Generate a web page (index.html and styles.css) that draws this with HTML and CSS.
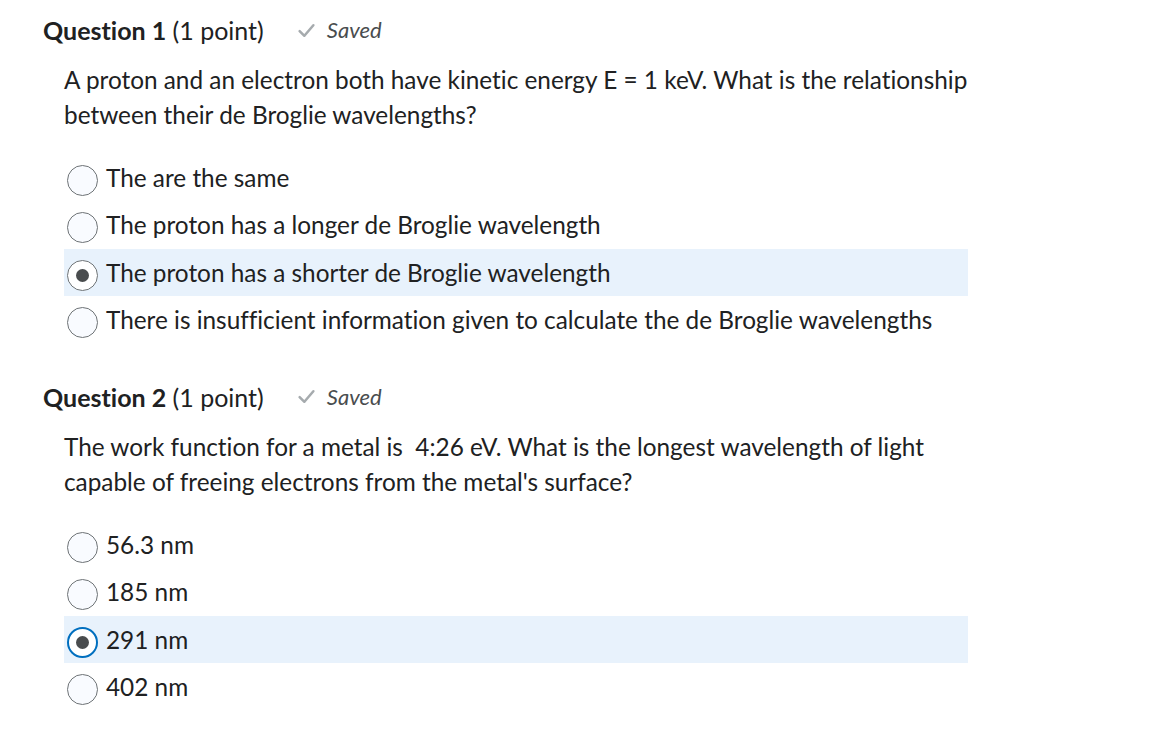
FILE: index.html
```html
<!DOCTYPE html>
<html>
<head>
<meta charset="utf-8">
<link rel="stylesheet" href="styles.css">
</head>
<body>
<div class="page">
  <section class="question">
    <h2 class="q-head"><span class="q-title">Question 1</span> <span class="q-points">(1 point)</span><span class="saved"><svg class="check" viewBox="0 0 18 18" width="19" height="19"><path d="M2.5 9.5 L7 14 L15.5 4" fill="none" stroke="#a6abae" stroke-width="2.4" stroke-linecap="round" stroke-linejoin="round"/></svg><em>Saved</em></span></h2>
    <div class="q-body">
      <p class="q-text">A proton and an electron both have kinetic energy E = 1 keV. What is the relationship between their de Broglie wavelengths?</p>
      <div class="options">
        <label class="opt"><span class="radio"></span><span class="opt-text">The are the same</span></label>
        <label class="opt"><span class="radio"></span><span class="opt-text">The proton has a longer de Broglie wavelength</span></label>
        <label class="opt selected"><span class="radio checked"></span><span class="opt-text">The proton has a shorter de Broglie wavelength</span></label>
        <label class="opt"><span class="radio"></span><span class="opt-text">There is insufficient information given to calculate the de Broglie wavelengths</span></label>
      </div>
    </div>
  </section>
  <section class="question q2">
    <h2 class="q-head"><span class="q-title">Question 2</span> <span class="q-points">(1 point)</span><span class="saved"><svg class="check" viewBox="0 0 18 18" width="19" height="19"><path d="M2.5 9.5 L7 14 L15.5 4" fill="none" stroke="#a6abae" stroke-width="2.4" stroke-linecap="round" stroke-linejoin="round"/></svg><em>Saved</em></span></h2>
    <div class="q-body">
      <p class="q-text">The work function for a metal is&nbsp; 4:26 eV. What is the longest wavelength of light capable of freeing electrons from the metal's surface?</p>
      <div class="options">
        <label class="opt"><span class="radio"></span><span class="opt-text">56.3 nm</span></label>
        <label class="opt"><span class="radio"></span><span class="opt-text">185 nm</span></label>
        <label class="opt selected"><span class="radio checked focus"></span><span class="opt-text">291 nm</span></label>
        <label class="opt"><span class="radio"></span><span class="opt-text">402 nm</span></label>
      </div>
    </div>
  </section>
</div>
</body>
</html>
```

FILE: styles.css
```css
* { box-sizing: border-box; }
body {
  margin: 0;
  background: #fff;
  font-family: Lato, "Open Sans", sans-serif;
  color: #202122;
  font-variant-ligatures: none;
}
.page {
  padding: 15px 0 0 43px;
}
.question {
  margin: 0;
}
.q2 {
  margin-top: 38.8px;
}
.q-head {
  margin: 0;
  font-size: 25px;
  line-height: 30px;
  font-weight: 400;
}
.q-title { font-weight: 700; }
.saved {
  display: inline-flex;
  align-items: center;
  vertical-align: top;
  height: 30px;
  margin-left: 33px;
  font-size: 22px;
  color: #494c4e;
}
.check { margin-right: 11px; }
.q-body {
  padding-left: 21px;
  width: 925px;
}
.q-text {
  margin: 17px 0 0 0;
  font-size: 24.35px;
  line-height: 35px;
}
.options {
  margin-top: 22px;
  display: flex;
  flex-direction: column;
}
.opt {
  display: flex;
  align-items: center;
  height: 47.3px;
  padding-left: 3px;
  font-size: 24.35px;
}
.opt.selected { background: #e8f2fc; }
.radio {
  width: 31px;
  height: 31px;
  border-radius: 50%;
  border: 1px solid #6e7376;
  background: #f9fbff;
  margin-right: 8px;
  flex: none;
  position: relative;
  top: 3px;
}
.radio.checked {
  border: 1px solid #6e7376;
  background: #fff;
}
.radio.checked::after {
  content: "";
  position: absolute;
  left: 50%;
  top: 50%;
  width: 13px;
  height: 13px;
  margin: -6.5px 0 0 -6.5px;
  border-radius: 50%;
  background: #494c4e;
}
.radio.focus {
  border: 2px solid #006fbf;
}
```
